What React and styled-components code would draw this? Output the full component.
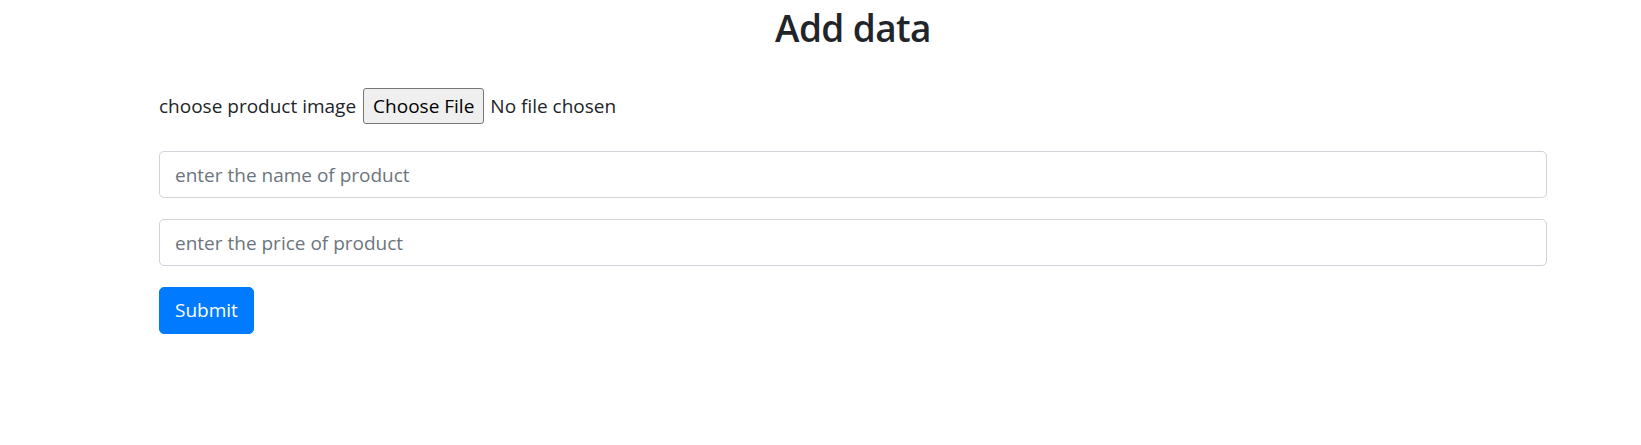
import React from 'react';
import styled, { createGlobalStyle } from 'styled-components';

const GlobalStyle = createGlobalStyle`
  * {
    box-sizing: border-box;
  }
  body {
    margin: 0;
    background: #fff;
    color: #212529;
    font-family: 'Open Sans', 'Noto Sans', sans-serif;
    font-size: 19px;
    line-height: 1.5;
  }
`;

const Wrapper = styled.div`
  width: 1388px;
  margin-left: 159px;
`;

const Title = styled.h2`
  margin: 0 0 37px;
  padding-top: 5px;
  font-size: 37px;
  font-weight: 600;
  line-height: 46px;
  letter-spacing: -0.6px;
  text-align: center;
  color: #212529;
`;

const Form = styled.form`
  display: flex;
  flex-direction: column;
  align-items: flex-start;
  gap: 21px;
`;

const FileRow = styled.div`
  display: flex;
  align-items: center;
  gap: 7px;
  height: 36px;
  margin-bottom: 6px;
`;

const FileInput = styled.input`
  font: inherit;
  color: #212529;

  &::file-selector-button {
    font: inherit;
    color: #000;
    height: 36px;
    padding: 0 9px;
    margin-right: 6px;
    background: #efefef;
    border: 1px solid #767676;
    border-radius: 3px;
  }
`;

const TextInput = styled.input`
  display: block;
  width: 100%;
  height: 47px;
  padding: 8px 15px;
  font: inherit;
  color: #495057;
  background: #fff;
  border: 1px solid #ced4da;
  border-radius: 5px;

  &::placeholder {
    color: #6c757d;
  }
`;

const SubmitButton = styled.button`
  height: 47px;
  padding: 0 15px;
  font: inherit;
  color: #fff;
  background: #007bff;
  border: 1px solid #007bff;
  border-radius: 5px;
`;

const App = () => {
  return (
    <>
      <GlobalStyle />
      <Wrapper>
        <Title>Add data</Title>
        <Form onSubmit={(e) => e.preventDefault()}>
          <FileRow>
            <label htmlFor="image">choose product image</label>
            <FileInput id="image" type="file" />
          </FileRow>
          <TextInput type="text" placeholder="enter the name of product" />
          <TextInput type="text" placeholder="enter the price of product" />
          <SubmitButton type="submit">Submit</SubmitButton>
        </Form>
      </Wrapper>
    </>
  );
};

export default App;
